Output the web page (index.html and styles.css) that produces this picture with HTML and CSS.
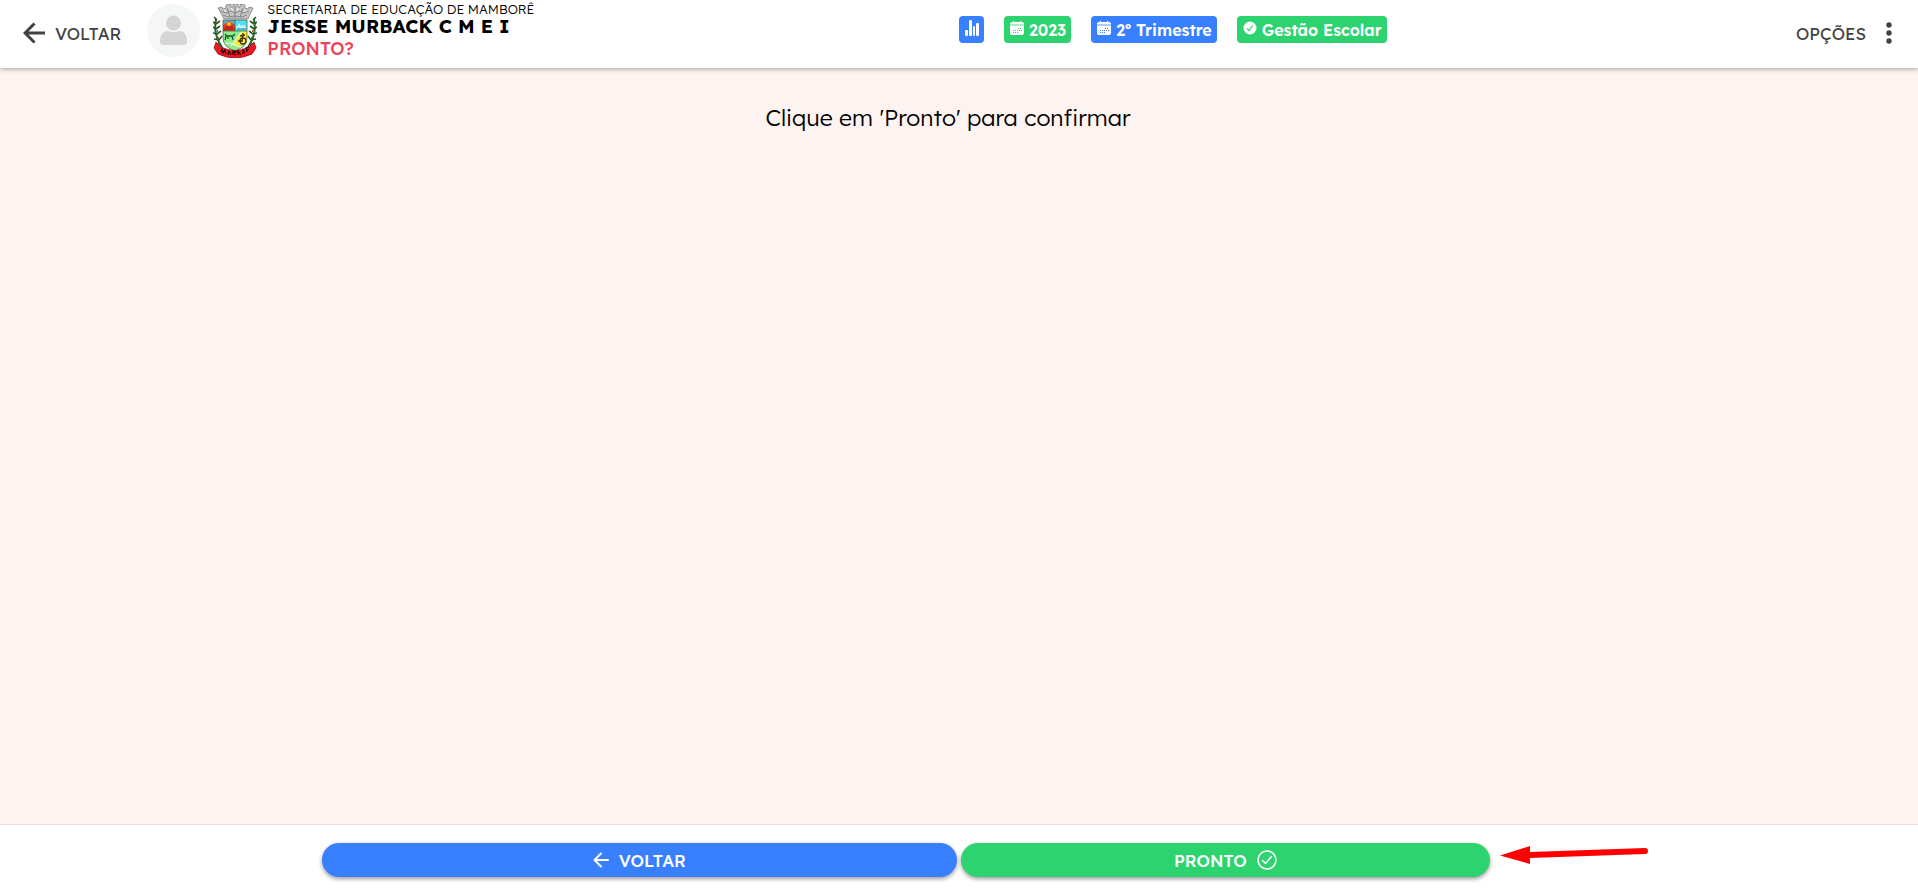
FILE: index.html
```html
<!DOCTYPE html>
<html lang="pt-BR">
<head>
    <meta charset="UTF-8">
    <meta name="viewport" content="width=device-width, initial-scale=1">
    <title>Pronto?</title>
    <link rel="stylesheet" href="styles.css">
</head>
<body>

    <header class="topbar">
        <div class="topbar-left">
            <button type="button" class="bar-btn">
                <svg class="back-icon" viewBox="0 0 22 22" fill="none" stroke="currentColor" stroke-width="3"><path d="M11.500 1.500 2 11l9.500 9.500M2 11h20"/></svg>
                VOLTAR
            </button>
            <svg class="avatar" viewBox="0 0 53 53" role="img" aria-label="Usuário">
                <circle cx="26.500" cy="26.500" r="26.500" fill="#f5f7f6"/>
                <circle cx="26.500" cy="19" r="7.500" fill="#d5d5d5"/>
                <path d="M13 37c0-6 3-10 8-10 2 1.500 9 1.500 11 0 5 0 8 4 8 10 0 3-1 4-4 4H17c-3 0-4-1-4-4z" fill="#d5d5d5"/>
            </svg>
            <svg class="crest" viewBox="0 0 44 54" role="img" aria-label="Brasão de Mamborê">
                <!-- crown -->
                <path d="M5 4l4-1 1 2 3-1V1l5-1v3h2V0h5v3h2V0l5 1v3l3 1 1-2 4 1-5 11H11z" fill="#c4c4c4" stroke="#666" stroke-width=".6"/>
                <path d="M8 7l5 2 5-2 4 2 4-2 5 2 5-2M10 11l5 2 7-1 7 1 5-2M14 4l3 9M30 4l-3 9M22 2v12" fill="none" stroke="#777" stroke-width=".8"/>
                <path d="M11 6l2 2M18 4l2 3M25 4l-1 3M33 6l-2 2" stroke="#fff"/>
                <!-- branches -->
                <path d="M3 15Q0 31 9 43M41 15q3 16-6 28" fill="none" stroke="#27642d" stroke-width="2"/>
                <path d="M4 16l-3-3M3 20l-3-2M3 20l4-3M3 25l-3-2M3 25l4-3M4 30l-4-1M4 30l4-3M6 36l-5-1M6 36l3-4M8 40l-5 0M40 16l3-3M41 20l3-2M41 20l-4-3M41 25l3-2M41 25l-4-3M40 30l4-1M40 30l-4-3M38 36l5-1M38 36l-3-4M36 40h5" stroke="#245c28" stroke-width="1.600"/>
                <path d="M3 18h1M4 27h1M5 34h1M40 18h1M39 27h1M38 34h1" stroke="#b44b2d" stroke-width="2"/>
                <!-- shield -->
                <path d="M10 16h24v18q0 9-12 13Q10 43 10 34z" fill="#8bed8d"/>
                <path d="M10 16h12v11H10z" fill="#ef3824"/>
                <path d="M22 16h12v11H22z" fill="#4ee4ef"/>
                <path d="M10 16h12v5l-3-2-3-2-3 2-3 2z" fill="#48b8cf"/>
                <circle cx="16" cy="20" r="2" fill="#ffc629"/>
                <path d="M11 25h10M12 23h8" stroke="#821e16"/>
                <path d="M34 27v11l-7 4-7-1 9-14z" fill="#fced24"/>
                <path d="M24 25l2-5 2 5M28 25l2-6 2 6M23 23h10" fill="none" stroke="#dff" stroke-width="1"/>
                <path d="M24 25h9M30 19v2" stroke="#356e88" stroke-width=".8"/>
                <path d="M12 30l2 2h6l2-2M13 32l-1 4M19 32l1 4M15 32v3" fill="none" stroke="#1b5b24" stroke-width="1.300"/>
                <path d="M30 29l-1 9M27 32l5-1M25 37h4" stroke="#393714" stroke-width="1.300"/>
                <circle cx="30" cy="37" r="3" fill="none" stroke="#393714" stroke-width="1.300"/>
                <path d="M29 27L18 42M10 41q6-4 12 0t12 0" fill="none" stroke="#fff"/>
                <path d="M10 16h24v18q0 9-12 13Q10 43 10 34zM22 16v11M10 27h24" fill="none" stroke="#4d4d36" stroke-width=".7"/>
                <!-- ribbon -->
                <path d="M3 38l5 5q14 7 28 0l5-5 2 6-4 6q-17 8-34 0l-4-6z" fill="#ed1822" stroke="#771017" stroke-width=".7"/>
                <path d="M8 48l1-3 1 4 2-3 1 4M15 51l1-4 2 4M20 51v-4l3 1-3 1 3 2M25 51v-4l3 4M30 50v-4l2 3M34 48l-1-4 3-1M34 46l2-1" fill="none" stroke="#350508" stroke-width="1.200"/>
            </svg>
            <div class="school">
                <span class="department">SECRETARIA DE EDUCAÇÃO DE MAMBORÊ</span>
                <strong class="school-name">JESSE MURBACK C M E I</strong>
                <h1 class="page-title">PRONTO?</h1>
            </div>
        </div>

        <div class="badges">
            <button type="button" class="badge blue" aria-label="Estatísticas">
                <svg class="stats-icon" viewBox="0 0 14 16" fill="currentColor"><rect y="10" width="3" height="6" rx="1"/><rect x="4" y="0" width="3" height="16" rx="1"/><rect x="8" y="6" width="2" height="10" rx="1"/><rect x="11" y="3" width="3" height="13" rx="1"/></svg>
            </button>
            <button type="button" class="badge green">
                <svg class="badge-icon" viewBox="0 0 14 14"><path d="M2 1h1V0h1v1h6V0h1v1h1q2 0 2 2H0q0-2 2-2zM0 5h14v7q0 2-2 2H2q-2 0-2-2z" fill="currentColor"/><path d="M0 3h14v2H0z" fill="currentColor" opacity=".6"/><path d="M8 7.500h4M3 9.500h9M3 11.500h6" stroke="#2dd36f" stroke-width="1" stroke-dasharray="1 1"/></svg>
                2023
            </button>
            <button type="button" class="badge blue">
                <svg class="badge-icon" viewBox="0 0 14 14"><path d="M2 1h1V0h1v1h6V0h1v1h1q2 0 2 2H0q0-2 2-2zM0 5h14v7q0 2-2 2H2q-2 0-2-2z" fill="currentColor"/><path d="M0 3h14v2H0z" fill="currentColor" opacity=".6"/><path d="M8 7.500h4M3 9.500h9M3 11.500h6" stroke="#3880ff" stroke-width="1" stroke-dasharray="1 1"/></svg>
                2º Trimestre
            </button>
            <button type="button" class="badge green">
                <svg class="badge-icon" viewBox="0 0 14 14"><circle cx="7" cy="7" r="6.500" fill="currentColor"/><path d="M4 7.500 6 9.500 10 4.500" fill="none" stroke="#2dd36f" stroke-width="1.200"/></svg>
                Gestão Escolar
            </button>
        </div>

        <button type="button" class="bar-btn options">
            OPÇÕES
            <svg class="dots-icon" viewBox="0 0 6 22" fill="currentColor"><circle cx="3" cy="3" r="2.700"/><circle cx="3" cy="11" r="2.700"/><circle cx="3" cy="19" r="2.700"/></svg>
        </button>
    </header>

    <main class="content">
        <p class="message">Clique em 'Pronto' para confirmar</p>
    </main>

    <footer class="footer">
        <div class="actions">
            <button type="button" class="action blue action-back">
                <svg class="action-arrow" viewBox="0 0 16 16" fill="none" stroke="currentColor" stroke-width="2" stroke-linecap="round" stroke-linejoin="round"><path d="M8 1.500 1.500 8 8 14.500M2 8h13"/></svg>
                VOLTAR
            </button>
            <button type="button" class="action green action-done">
                PRONTO
                <svg class="action-check" viewBox="0 0 20 20" fill="none" stroke="currentColor" stroke-width="1.500" stroke-linecap="round" stroke-linejoin="round"><circle cx="10" cy="10" r="9"/><path d="M5.500 10.500 8.500 13.500 14.500 6.500"/></svg>
            </button>
            <svg class="pointer" viewBox="0 0 148 18" aria-hidden="true"><path d="M0 9.500 30 0v6L145 2q3 0 3 3t-3 3L30 12v6z" fill="#f00"/></svg>
        </div>
    </footer>

</body>
</html>
```

FILE: styles.css
```css
* {
    box-sizing: border-box;
}
body {
    margin: 0;
    min-height: 100vh;
    display: flex;
    flex-direction: column;
    font-family: Lexend, Inter, sans-serif;
    font-weight: 300;
    background: #fdf3f1;
    color: #000;
}
button {
    font-family: inherit;
    border: none;
    cursor: pointer;
}
svg {
    display: block;
    flex: none;
}
.topbar {
    display: grid;
    grid-template-columns: 50% auto 1fr;
    height: 68px;
    background: #fff;
    box-shadow: 0 1px 5px rgba(0, 0, 0, 0.35);
}
.topbar-left {
    display: flex;
    align-items: flex-start;
    padding: 4px 0 0 23px;
}
.bar-btn {
    display: flex;
    align-items: center;
    height: 58px;
    padding: 0;
    background: none;
    color: #424242;
    font-size: 17px;
    font-weight: 400;
}
.back-icon {
    width: 22px;
    height: 22px;
    margin-right: 10px;
}
.avatar {
    width: 53px;
    height: 53px;
    margin-left: 26px;
}
.crest {
    width: 44px;
    height: 54px;
    margin: 0 10px 0 13px;
}
.school {
    display: flex;
    flex-direction: column;
    white-space: nowrap;
}
.department {
    font-size: 13px;
    line-height: 11px;
}
.school-name {
    font-size: 19px;
    font-weight: 700;
    line-height: 22px;
}
.page-title {
    margin: 0;
    font-size: 18px;
    font-weight: 500;
    line-height: 24px;
    color: #eb445a;
}
.badges {
    display: flex;
    align-items: flex-start;
    gap: 20px;
    padding-top: 16px;
}
.badge {
    display: flex;
    align-items: center;
    gap: 5px;
    height: 27px;
    padding: 0 5px 0 6px;
    border-radius: 4px;
    font-size: 16px;
    font-weight: 600;
    color: #fff;
    white-space: nowrap;
}
.badge-icon {
    width: 14px;
    height: 14px;
    margin-bottom: 3px;
}
.stats-icon {
    width: 14px;
    height: 16px;
    margin-bottom: 3px;
}
.blue {
    background: #3880ff;
}
.green {
    background: #2dd36f;
}
.options {
    justify-self: end;
    gap: 20px;
    margin-top: 4px;
    padding-right: 26px;
}
.dots-icon {
    width: 6px;
    height: 22px;
}
.content {
    flex: 1;
    padding: 32px 22px 0 0;
}
.message {
    margin: 0;
    font-size: 23px;
    line-height: 36px;
    text-align: center;
}
.footer {
    padding: 17px 0 14px;
    background: #fff;
    border-top: 1px solid #ecdfdf;
}
.actions {
    position: relative;
    display: grid;
    grid-template-columns: repeat(12, 1fr);
    width: 66.6667%;
    margin: 0 auto;
}
.action {
    display: flex;
    align-items: center;
    justify-content: center;
    gap: 10px;
    height: 34px;
    margin: 1px 2px 0;
    border-radius: 17px;
    box-shadow: 0 2px 4px rgba(0, 0, 0, 0.4);
    color: #fff;
    font-size: 17px;
    font-weight: 500;
}
.action-back {
    grid-column: span 6;
}
.action-done {
    grid-column: span 5;
}
.action-arrow {
    width: 16px;
    height: 16px;
}
.action-check {
    width: 20px;
    height: 20px;
}
/* red arrow lying over the bar, pointing at the confirm button */
.pointer {
    position: absolute;
    top: 4px;
    right: -50px;
    width: 148px;
    height: 18px;
}
```
